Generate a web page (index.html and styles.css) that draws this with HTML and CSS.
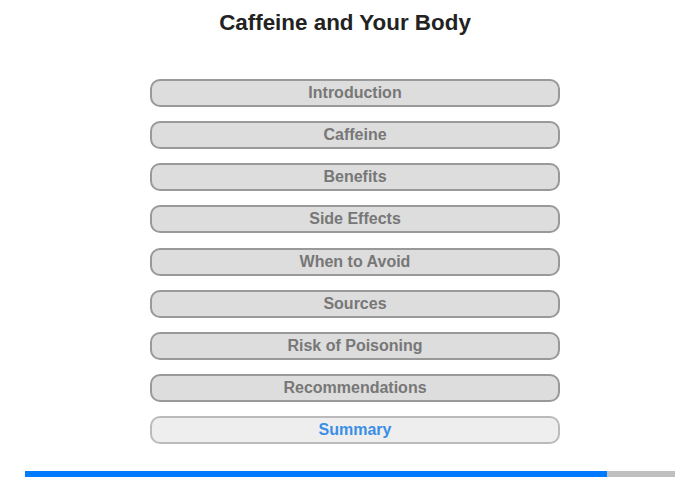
FILE: index.html
```html
<!DOCTYPE html>
<html lang="en">
<head>
    <meta charset="UTF-8">
    <title>Caffeine and Your Body</title>
    <link rel="stylesheet" href="styles.css">
</head>
<body>
    <header>
        <h1>Caffeine and Your Body</h1>
    </header>

    <nav class="menu">
        <a class="menu-item">Introduction</a>
        <a class="menu-item">Caffeine</a>
        <a class="menu-item">Benefits</a>
        <a class="menu-item">Side Effects</a>
        <a class="menu-item">When to Avoid</a>
        <a class="menu-item">Sources</a>
        <a class="menu-item">Risk of Poisoning</a>
        <a class="menu-item">Recommendations</a>
        <a class="menu-item current">Summary</a>
    </nav>

    <div class="progress">
        <div class="progress-fill" style="width: 582px"></div>
    </div>
</body>
</html>
```
FILE: styles.css
```css
body {
    margin: 0;
    font-family: "Liberation Sans", Arial, sans-serif;
    background: #ffffff;
}
header {
    padding: 10px 10px 0 0;
    text-align: center;
}
h1 {
    margin: 0;
    font-size: 22.4px;
    line-height: 26px;
    color: #222222;
}
.menu {
    display: flex;
    flex-direction: column;
    gap: 14.15px;
    width: 410px;
    margin: 43px 0 0 150px;
}
.menu-item {
    box-sizing: border-box;
    height: 28px;
    border: 2px solid #999999;
    border-radius: 10px;
    background: #dddddd;
    color: #777777;
    font-size: 16px;
    font-weight: bold;
    line-height: 24px;
    text-align: center;
}
.menu-item.current {
    background: #eeeeee;
    border-color: #bbbbbb;
    color: #3a8ee6;
}
.progress {
    width: 650px;
    height: 6px;
    margin: 27px 0 0 25px;
    background: #c0c0c0;
}
.progress-fill {
    height: 100%;
    background: #007bff;
}
```
